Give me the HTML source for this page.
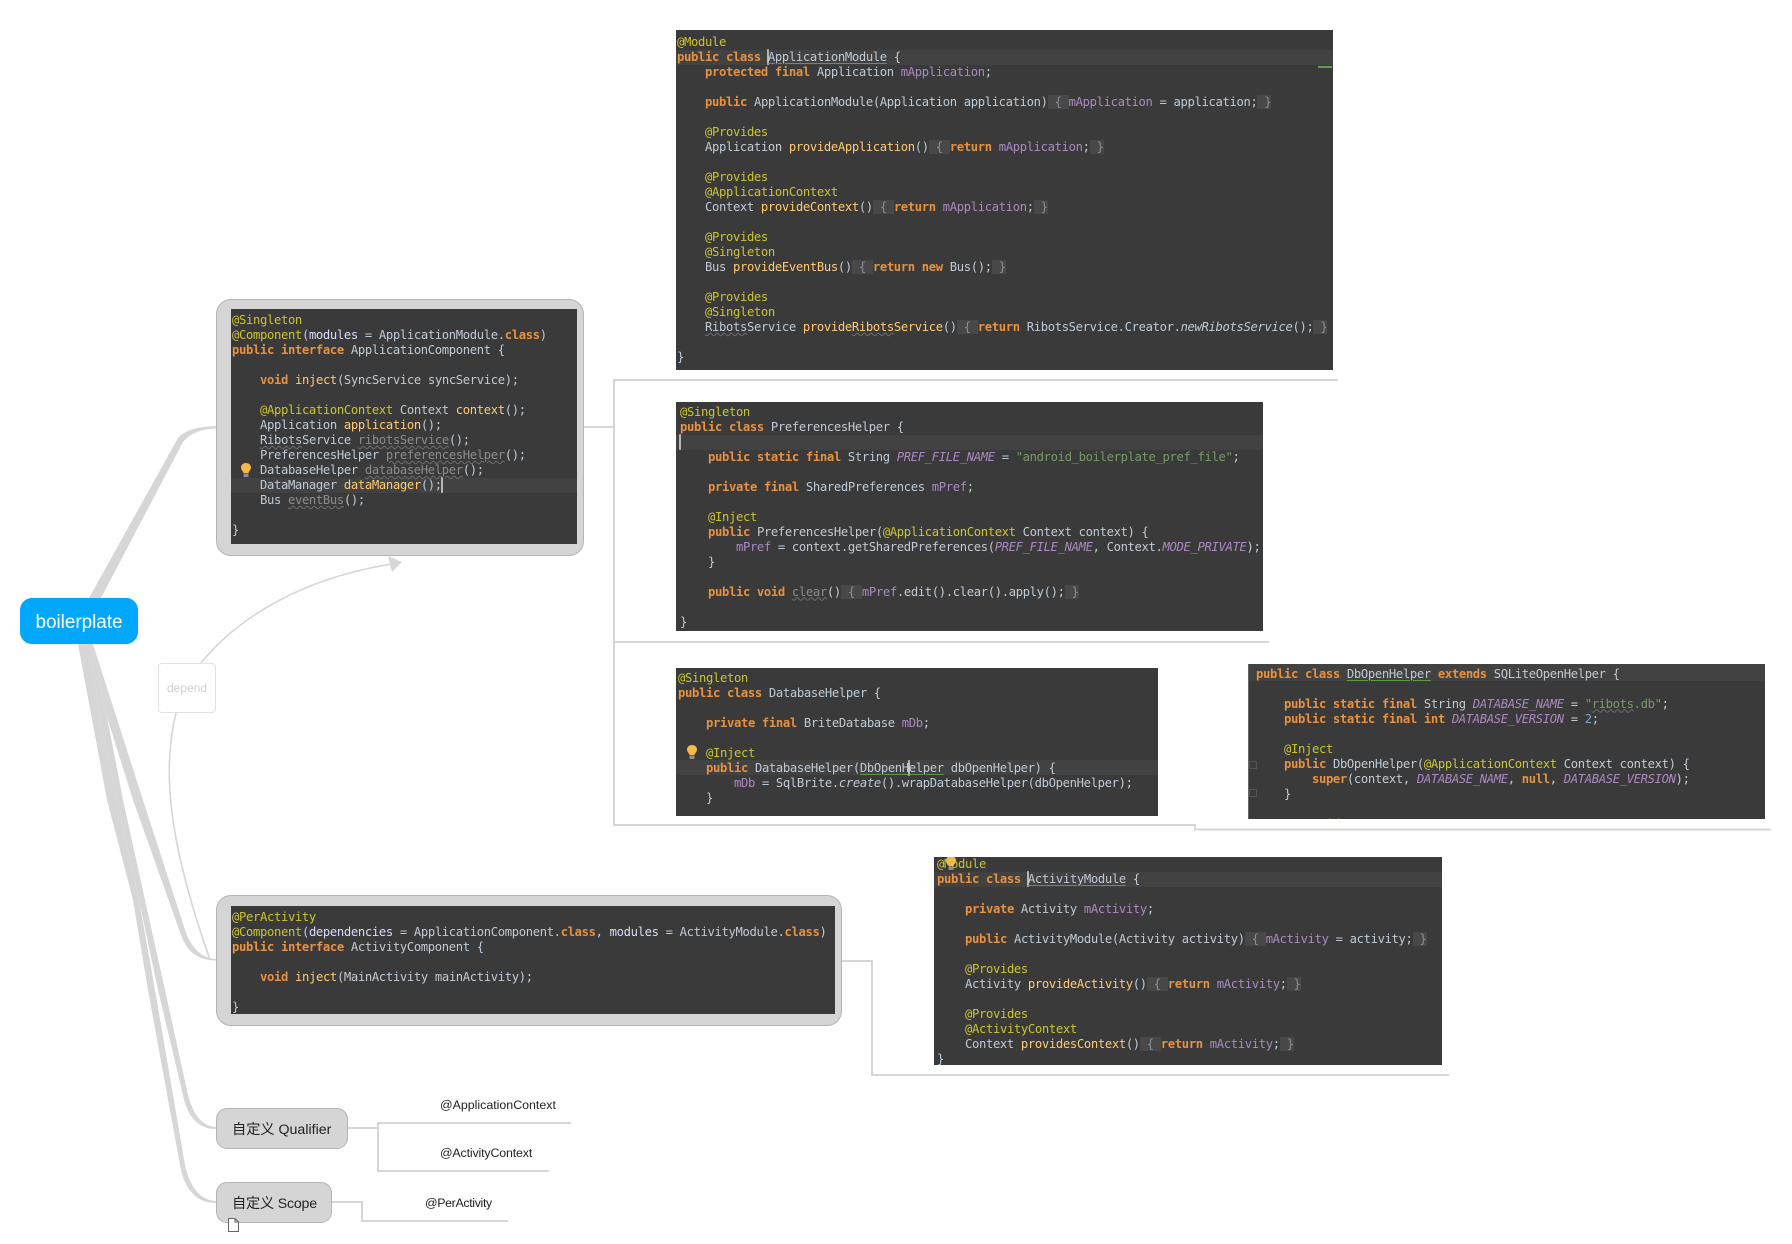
<!DOCTYPE html>
<html><head><meta charset="utf-8"><title>boilerplate</title>
<style>
html,body{margin:0;padding:0;background:#fff}
#w{position:relative;width:1792px;height:1244px;overflow:hidden;background:#fff}
svg.bg{position:absolute;left:0;top:0}
.node{position:absolute;box-sizing:border-box;background:#d5d5d5;border:1px solid #b4b4b4}
.p{position:absolute;background:#3a3a3a;overflow:hidden;filter:blur(.3px)}
.p pre{position:absolute;margin:0;font:12.2px/15px "DejaVu Sans Mono","Liberation Mono",monospace;letter-spacing:-.345px;color:#bdcad6;white-space:pre}
.cur{position:absolute;left:0;right:0;height:15px;background:#424242}
.k{color:#e8913f;font-weight:bold}
.a{color:#cbc430}
.m{color:#ffca72}
.f{color:#ab89c0}
.s{color:#769a66}
.n{color:#74a5ca}
.o{color:#d8dcf8}
.i{font-style:italic}
.h{background:#484848;color:#8b8f93}
.u{text-decoration:underline wavy #6e6e6e 1px;text-underline-offset:1px}
.d{color:#8c8c8c}
.g{text-decoration:underline solid #5e9a3e 1px;text-underline-offset:2px}
.c{display:inline-block;width:0;height:14px;vertical-align:-3px;box-shadow:0 0 0 .8px #d4d4d4}
.lb{position:absolute;font:12.4px/16px "Liberation Sans",sans-serif;color:#222;white-space:nowrap}
.nt{position:absolute;font:14.2px/20px "Liberation Sans","Noto Sans CJK SC",sans-serif;color:#222;white-space:nowrap}
</style></head><body><div id="w">

<svg class="bg" width="1792" height="1244" viewBox="0 0 1792 1244">
<g fill="#d6d6d6">
<path d="M89 598 L178 438 Q187 427 216 426 L216 428.500 Q194 429 183 442 L101 598Z"/>
<path d="M78 644 L107 800 L133 900 L148 990 L180 1165 Q187 1203 216 1203 L216 1201 Q193 1200 185 1165 L155 990 L139 900 L100 720 L90 644 Z"/>
<path d="M90 644 L100 720 L139 900 L158 990 L183 1095 Q190 1129 216 1129 L216 1127 Q196 1126 188 1095 L165 990 L145 900 L123 800 L107 717 L93 644Z"/>
<path d="M107 717 L133 800 L181 935 Q190 960.500 216 960.500 L216 959 Q196 958 186 933 L143 800 L93 644 Z"/>
</g>
<g fill="none" stroke="#d6d6d6" stroke-width="1.6">
<path d="M201 663 C240 615 305 578 392 564"/>
<path d="M176 713 C162 770 168 840 210 960"/>
</g>
<path d="M388 556 L402 562 L392 572Z" fill="#d6d6d6"/>
<g fill="none" stroke="#d6d6d6" stroke-width="2">
<path d="M584 427 H614"/>
<path d="M1338 380 H614 V825 H1195 V829.5 H1771"/>
<path d="M614 642 H1269"/>
<path d="M842 961 H872 V1075 H1449"/>
<path d="M348 1128 H378"/>
<path d="M571 1123 H378 V1171 H549"/>
<path d="M332 1202 H362 V1221 H508"/>
</g>
</svg>

<!-- root -->
<div style="position:absolute;left:20px;top:598px;width:118px;height:46px;border-radius:12px;background:#00a7fb;color:#fff;font:19px/50px 'Liberation Sans',sans-serif;text-align:center;letter-spacing:-.05px">boilerplate</div>
<div style="position:absolute;box-sizing:border-box;left:158px;top:663px;width:58px;height:50px;border:1px solid #e2e2e2;border-radius:4px;background:#fff;color:#cfcfcf;font:12px/48px 'Liberation Sans',sans-serif;text-align:center">depend</div>

<!-- ApplicationComponent -->
<div class="node" style="left:216px;top:299px;width:368px;height:257px;border-radius:15px"></div>
<div class="p" style="left:231px;top:309px;width:346px;height:235px">
<div class="cur" style="top:169px"></div>
<pre style="left:1px;top:4px"><span class="a">@Singleton</span>
<span class="a">@Component</span>(<span class="o">modules</span> = ApplicationModule.<span class="k">class</span>)
<span class="k">public interface</span> ApplicationComponent {

    <span class="k">void</span> <span class="m">inject</span>(SyncService syncService);

    <span class="a">@ApplicationContext</span> Context <span class="m">context</span>();
    Application <span class="m">application</span>();
    <span class="u">Ribots</span>Service <span class="u d">ribotsService</span>();
    PreferencesHelper <span class="u d">preferencesHelper</span>();
    DatabaseHelper <span class="u d">databaseHelper</span>();
    DataManager <span class="m">dataManager</span>();<span class="c"></span>
    Bus <span class="u d">eventBus</span>();

}</pre>
<svg style="position:absolute;left:9px;top:153px" width="12" height="16" viewBox="0 0 12 16"><path d="M6 1C3 1 1 3 1 5.5 1 8 3 9 3.5 11H8.500C9 9 11 8 11 5.500 11 3 9 1 6 1Z" fill="#f5b84a"/><rect x="3.500" y="11.500" width="5" height="3.500" fill="#8e8e8e"/></svg>
</div>

<!-- ActivityComponent -->
<div class="node" style="left:216px;top:895px;width:626px;height:131px;border-radius:15px"></div>
<div class="p" style="left:231px;top:906px;width:604px;height:108px">
<pre style="left:1px;top:4px"><span class="a">@PerActivity</span>
<span class="a">@Component</span>(<span class="o">dependencies</span> = ApplicationComponent.<span class="k">class</span>, <span class="o">modules</span> = ActivityModule.<span class="k">class</span>)
<span class="k">public interface</span> ActivityComponent {

    <span class="k">void</span> <span class="m">inject</span>(MainActivity mainActivity);

}</pre>
</div>

<!-- ApplicationModule -->
<div class="p" style="left:676px;top:30px;width:657px;height:340px">
<div class="cur" style="top:19.500px"></div>
<div style="position:absolute;left:642px;top:35.500px;width:14px;height:2px;background:#5f9e4e"></div>
<pre style="left:1px;top:5px"><span class="a">@Module</span>
<span class="k">public class</span> <span class="c"></span><span class="g">ApplicationModule</span> {
    <span class="k">protected final</span> Application <span class="f">mApplication</span>;

    <span class="k">public</span> ApplicationModule(Application application)<span class="h"> { </span><span class="f">mApplication</span> = application;<span class="h"> }</span>

    <span class="a">@Provides</span>
    Application <span class="m">provideApplication</span>()<span class="h"> { </span><span class="k">return</span> <span class="f">mApplication</span>;<span class="h"> }</span>

    <span class="a">@Provides</span>
    <span class="a">@ApplicationContext</span>
    Context <span class="m">provideContext</span>()<span class="h"> { </span><span class="k">return</span> <span class="f">mApplication</span>;<span class="h"> }</span>

    <span class="a">@Provides</span>
    <span class="a">@Singleton</span>
    Bus <span class="m">provideEventBus</span>()<span class="h"> { </span><span class="k">return new</span> Bus();<span class="h"> }</span>

    <span class="a">@Provides</span>
    <span class="a">@Singleton</span>
    <span class="u">Ribots</span>Service <span class="m">provide<span class="u">Ribots</span>Service</span>()<span class="h"> { </span><span class="k">return</span> RibotsService.Creator.<span class="i">newRibotsService</span>();<span class="h"> }</span>

}</pre>
</div>

<!-- PreferencesHelper -->
<div class="p" style="left:676px;top:402px;width:587px;height:229px">
<div class="cur" style="top:32.500px"></div>
<pre style="left:4px;top:2.500px"><span class="a">@Singleton</span>
<span class="k">public class</span> PreferencesHelper {
<span class="c"></span>
    <span class="k">public static final</span> String <span class="f i">PREF_FILE_NAME</span> = <span class="s">"android_boilerplate_pref_file"</span>;

    <span class="k">private final</span> SharedPreferences <span class="f">mPref</span>;

    <span class="a">@Inject</span>
    <span class="k">public</span> PreferencesHelper(<span class="a">@ApplicationContext</span> Context context) {
        <span class="f">mPref</span> = context.getSharedPreferences(<span class="f i">PREF_FILE_NAME</span>, Context.<span class="f i">MODE_PRIVATE</span>);
    }

    <span class="k">public void</span> <span class="u d">clear</span>()<span class="h"> { </span><span class="f">mPref</span>.edit().clear().apply();<span class="h"> }</span>

}</pre>
</div>

<!-- DatabaseHelper -->
<div class="p" style="left:676px;top:668px;width:482px;height:148px">
<div class="cur" style="top:92px"></div>
<pre style="left:2px;top:2.500px"><span class="a">@Singleton</span>
<span class="k">public class</span> DatabaseHelper {

    <span class="k">private final</span> BriteDatabase <span class="f">mDb</span>;

    <span class="a">@Inject</span>
    <span class="k">public</span> DatabaseHelper(<span class="g">DbOpenH<span class="c"></span>elper</span> dbOpenHelper) {
        <span class="f">mDb</span> = SqlBrite.<span class="i">create</span>().wrapDatabaseHelper(dbOpenHelper);
    }</pre>
<svg style="position:absolute;left:10px;top:76px" width="12" height="16" viewBox="0 0 12 16"><path d="M6 1C3 1 1 3 1 5.500 1 8 3 9 3.500 11H8.500C9 9 11 8 11 5.500 11 3 9 1 6 1Z" fill="#f5b84a"/><rect x="3.500" y="11.500" width="5" height="3.500" fill="#8e8e8e"/></svg>
</div>

<!-- DbOpenHelper -->
<div class="p" style="left:1248px;top:664px;width:517px;height:155px">
<div class="cur" style="top:0;height:17px"></div>
<div style="position:absolute;left:0;top:0;width:1px;bottom:0;background:#666"></div>
<div style="position:absolute;left:1px;top:97px;width:6px;height:6px;border:1px solid #555"></div>
<div style="position:absolute;left:1px;top:125px;width:6px;height:6px;border:1px solid #555"></div>
<pre style="left:8px;top:2.500px"><span class="k">public class</span> <span class="g">DbOpenHelper</span> <span class="k">extends</span> SQLiteOpenHelper {

    <span class="k">public static final</span> String <span class="f i">DATABASE_NAME</span> = <span class="s">"<span class="u">ribots</span>.db"</span>;
    <span class="k">public static final int</span> <span class="f i">DATABASE_VERSION</span> = <span class="n">2</span>;

    <span class="a">@Inject</span>
    <span class="k">public</span> DbOpenHelper(<span class="a">@ApplicationContext</span> Context context) {
        <span class="k">super</span>(context, <span class="f i">DATABASE_NAME</span>, <span class="k">null</span>, <span class="f i">DATABASE_VERSION</span>);
    }

    <span class="a">@Override</span></pre>
</div>

<!-- ActivityModule -->
<div class="p" style="left:934px;top:857px;width:508px;height:208px">
<div class="cur" style="top:14.500px"></div>
<pre style="left:3px;top:-0.500px"><span class="a">@Module</span>
<span class="k">public class</span> <span class="c"></span><span class="g">ActivityModule</span> {

    <span class="k">private</span> Activity <span class="f">mActivity</span>;

    <span class="k">public</span> ActivityModule(Activity activity)<span class="h"> { </span><span class="f">mActivity</span> = activity;<span class="h"> }</span>

    <span class="a">@Provides</span>
    Activity <span class="m">provideActivity</span>()<span class="h"> { </span><span class="k">return</span> <span class="f">mActivity</span>;<span class="h"> }</span>

    <span class="a">@Provides</span>
    <span class="a">@ActivityContext</span>
    Context <span class="m">providesContext</span>()<span class="h"> { </span><span class="k">return</span> <span class="f">mActivity</span>;<span class="h"> }</span>
}</pre>
<svg style="position:absolute;left:11px;top:-2px" width="12" height="16" viewBox="0 0 12 16"><path d="M6 1C3 1 1 3 1 5.500 1 8 3 9 3.500 11H8.500C9 9 11 8 11 5.500 11 3 9 1 6 1Z" fill="#f5b84a"/><rect x="3.500" y="11.500" width="5" height="3.500" fill="#8e8e8e"/></svg>
</div>

<!-- small nodes -->
<div class="node" style="left:216px;top:1108px;width:132px;height:41px;border-radius:11px"></div>
<div class="nt" style="left:232px;top:1120px">自定义 Qualifier</div>
<div class="node" style="left:216px;top:1182px;width:116px;height:41px;border-radius:11px"></div>
<div class="nt" style="left:232px;top:1194px;letter-spacing:-.2px">自定义 Scope</div>
<svg style="position:absolute;left:227px;top:1217px" width="13" height="16" viewBox="0 0 13 16"><path d="M1.500 1.500H8L11.500 5V14.500H1.500Z M8 1.500V5H11.500" fill="#fff" stroke="#666" stroke-width="1"/></svg>

<div class="lb" style="left:440px;top:1097px">@ApplicationContext</div>
<div class="lb" style="left:440px;top:1145px;letter-spacing:-.15px">@ActivityContext</div>
<div class="lb" style="left:425px;top:1195px;letter-spacing:-.35px">@PerActivity</div>

</div></body></html>
